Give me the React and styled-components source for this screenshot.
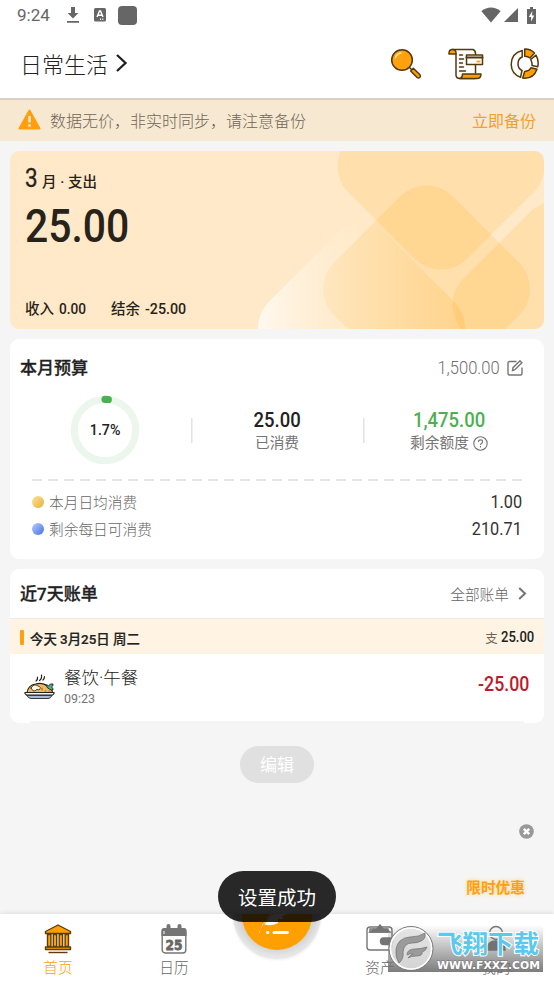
import React from 'react';
import styled, { createGlobalStyle } from 'styled-components';

const GlobalStyle = createGlobalStyle`
  * {
    box-sizing: border-box;
  }
  body {
    margin: 0;
    background: #f5f5f5;
    font-family: Roboto, 'Noto Sans CJK SC', sans-serif;
    color: #212121;
  }
`;

const tabs = [
  { key: 'home', label: '首页', active: true },
  { key: 'calendar', label: '日历' },
  { key: 'add' },
  { key: 'assets', label: '资产' },
  { key: 'me', label: '我的' },
];

const averages = [
  { label: '本月日均消费', value: '1.00', from: '#fbe3a0', to: '#e9b031' },
  { label: '剩余每日可消费', value: '210.71', from: '#b9cdfb', to: '#4270e4' },
];

function StatusBar() {
  return (
    <StatusRow>
      <Clock>9:24</Clock>
      <svg width='14' height='18' viewBox='0 0 14 18' fill='#666'>
        <path d='M5 1h4v6h3.4L7 12.4 1.6 7H5zM1 15h12v1.7H1z' />
      </svg>
      <svg width='12' height='14' viewBox='0 0 12 14'>
        <rect width='12' height='13.5' rx='1.5' fill='#666' />
        <path
          d='M3 9 5.5 3h1L9 9M4 7.2h4M6 11.3h1M8.3 11.3h1'
          fill='none'
          stroke='#fff'
          strokeWidth='1.4'
        />
      </svg>
      <AppSquare />
      <StatusIcons>
        <svg width='20' height='16' viewBox='0 0 20 16' fill='#666'>
          <path d='M.4 4.2C6-.6 14-.6 19.6 4.2L10 15.5z' />
        </svg>
        <svg width='14' height='14' viewBox='0 0 14 14' fill='#666'>
          <path d='M14 0v14H0z' />
        </svg>
        <svg width='9' height='17' viewBox='0 0 9 17'>
          <path d='M3 0h3v2h3v15H0V2h3z' fill='#666' />
          <path d='M5.3 4 1.8 10h2.3v4.5L7.3 8.5H5z' fill='#fff' />
        </svg>
      </StatusIcons>
    </StatusRow>
  );
}

const SearchIcon = (
  <svg width='32' height='32' viewBox='0 0 32 32'>
    <g stroke='#54380c' strokeWidth='1.5' strokeLinecap='round' strokeLinejoin='round'>
      <path d='m18.5 18.5 3 3' />
      <path d='m20.7 23 2.6-2.7 6.7 6.5q1 1.5-.3 2.7-1.3 1-2.6 0z' fill='#ff9f05' />
      <circle cx='12' cy='12' r='10.3' fill='#ffa20d' />
    </g>
    <path d='M5.500 9.500q1.500-4 5.500-4.500' fill='none' stroke='#ffe4ad' strokeWidth='1.6' strokeLinecap='round' />
  </svg>
);

const BillIcon = (
  <svg width='36' height='32' viewBox='0 0 36 32'>
    <g fill='none' stroke='#54380c' strokeWidth='1.5' strokeLinejoin='round' strokeLinecap='round'>
      <path d='M4 1.5h21q2.5 1 2.5 4v1M8 6v21q0 3.500 4 3.500h15M27.500 17v8' />
      <path d='M1 5q0-3.500 3.500-3.500T8 5v1H1z' fill='#ff9f05' />
      <path d='M14.500 26H33q0 4.500-4 4.500H11.500q3-.5 3-4.500z' fill='#ff9f05' />
      <rect x='18.5' y='7' width='16' height='9.5' fill='#fff' />
      <path d='M18.500 9.500h16' strokeWidth='2' />
      <path d='M11.500 7h3M11.500 11h4M11.500 15h3M11.500 19h4M11.500 23h6' />
    </g>
    <path d='M28.500 13.500h4' stroke='#ff9f05' strokeWidth='1.8' />
  </svg>
);

const ChartIcon = (
  <svg width='30' height='32' viewBox='0 0 30 32'>
    <g stroke='#54380c' strokeWidth='1.5' strokeLinejoin='round' fill='#fff'>
      <path d='M12.2 2.500V9q-4.2 1.500-4.2 7 0 4.500 4 6.500l-1.500 6.800Q1.500 26 1.200 16.500 1.500 5 12.200 2.500z' />
      <path d='M14.7 1q5.800-.2 9.800 4l-4.500 5q-2-1.700-5.300-1.800z' fill='#ff9f05' />
      <path d='m26 7.200-5.300 4.300q1.800 3.500 1.300 6l5.700 1.300q1.500-6-1.700-11.600z' />
      <path d='m27 21.200-6-1.500q-1.700 3.500-6.300 3.800l-2 6.500q10.800 1.200 14.300-8.800z' fill='#ff9f05' />
    </g>
  </svg>
);

function Header() {
  return (
    <HeaderRow>
      <Ledger>
        日常生活
        <svg width='14' height='20' viewBox='0 0 14 20' fill='none' stroke='#212121' strokeWidth='2.3'>
          <path d='m2 2 8.500 8L2 18' />
        </svg>
      </Ledger>
      <HeaderIcons>
        {SearchIcon}
        {BillIcon}
        {ChartIcon}
      </HeaderIcons>
    </HeaderRow>
  );
}

function BackupBanner() {
  return (
    <Banner>
      <svg width='23' height='21' viewBox='0 0 23 21'>
        <path d='M11.500 1.500 21.500 19.500H1.500z' fill='#ff9f0e' stroke='#ff9f0e' strokeWidth='2' strokeLinejoin='round' />
        <path d='M11.500 7v6.500M11.500 15.300v2.500' stroke='#f9e8d0' strokeWidth='2.5' />
      </svg>
      <BannerText>数据无价，非实时同步，请注意备份</BannerText>
      <BannerAction>立即备份</BannerAction>
    </Banner>
  );
}

function Diamond({ cx, cy, fill = '#ffa000', opacity = 0.14 }) {
  return (
    <rect
      x={cx - 84}
      y={cy - 84}
      width='168'
      height='168'
      rx='37'
      transform={`rotate(45 ${cx} ${cy})`}
      fill={fill}
      fillOpacity={opacity}
    />
  );
}

function SummaryCard() {
  return (
    <Summary>
      <SummaryArt viewBox='0 0 534 178'>
        <defs>
          {/* runs left to right once the diamond's 45 degree turn is undone */}
          <linearGradient
            id='glow'
            gradientUnits='userSpaceOnUse'
            gradientTransform='rotate(-45 351.5 177)'
            x1='248'
            y1='177'
            x2='455'
            y2='177'
          >
            <stop offset='0' stopColor='#fff' stopOpacity='.72' />
            <stop offset='.45' stopColor='#fff0d8' stopOpacity='.2' />
            <stop offset='1' stopColor='#ffa000' stopOpacity='.18' />
          </linearGradient>
        </defs>
        <Diamond cx={431} cy={15} />
        <Diamond cx={416.5} cy={138} />
        <Diamond cx={546} cy={154} />
        <Diamond cx={351.5} cy={177} fill='url(#glow)' opacity={1} />
      </SummaryArt>
      <SummaryBody>
        <MonthLine>
          <Num $size={25} $sx={0.9} $weight={400}>3</Num>
          月 · 支出
        </MonthLine>
        <Total>
          <Num $size={47} $sx={0.87} $weight={500}>25.00</Num>
        </Total>
        <BalanceLine>
          <Balance $width={86}>
            收入 <Num $size={15.5} $sx={0.88} $weight={500}>0.00</Num>
          </Balance>
          <Balance>
            结余 <Num $size={15.5} $sx={0.92} $weight={500}>-25.00</Num>
          </Balance>
        </BalanceLine>
      </SummaryBody>
    </Summary>
  );
}

function BudgetCard() {
  return (
    <Card $height={220}>
      <BudgetHead>
        <CardTitle>本月预算</CardTitle>
        <BudgetAmount>
          <Num $size={18} $sx={0.92} $weight={300} $origin='right'>1,500.00</Num>
          <svg width='16' height='16' viewBox='0 0 16 16' fill='none' stroke='#757575' strokeWidth='1.4'>
            <path d='M9.500 1.500h-7q-1.500 0-1.500 1.500v10.500Q1 15 2.500 15h11q1.500 0 1.500-1.500V7.500' />
            <path d='m5.500 10.500.5-2.800L13 .8l1.900 1.900-7 7z' />
          </svg>
        </BudgetAmount>
      </BudgetHead>
      <Stats>
        <Stat>
          <Ring>
            <svg width='70' height='70' viewBox='0 0 70 70' fill='none' strokeWidth='7.2'>
              <circle cx='35' cy='35' r='30.7' stroke='#edf6ed' />
              <path d='M35 4.300a30.700 30.700 0 0 1 3.300.2' stroke='#4caf50' strokeLinecap='round' />
            </svg>
            <RingLabel>
              <Num $size={15} $sx={0.95} $weight={500} $origin='center'>1.7%</Num>
            </RingLabel>
          </Ring>
        </Stat>
        <Stat $divided>
          <Num $size={20.5} $sx={0.9} $weight={500} $origin='center'>25.00</Num>
          <StatLabel>已消费</StatLabel>
        </Stat>
        <Stat $divided $color='#4caf50'>
          <Num $size={20.5} $sx={0.9} $weight={500} $origin='center'>1,475.00</Num>
          <StatLabel>
            剩余额度
            <svg width='15' height='15' viewBox='0 0 15 15' fill='none' stroke='#757575' strokeWidth='1.1'>
              <circle cx='7.5' cy='7.5' r='6.7' />
              <path d='M5.400 6q0-2.100 2.100-2.100T9.600 5.800q0 1-1.100 1.600-1 .5-1 1.500M7.500 10v1.400' />
            </svg>
          </StatLabel>
        </Stat>
      </Stats>
      <DashedLine />
      {averages.map((item) => (
        <AverageRow key={item.label}>
          <Dot $from={item.from} $to={item.to} />
          {item.label}
          <AverageValue>
            <Num $size={17.5} $sx={0.93} $weight={400} $origin='right'>{item.value}</Num>
          </AverageValue>
        </AverageRow>
      ))}
    </Card>
  );
}

const FoodIcon = (
  <svg width='31' height='28' viewBox='0 0 31 28' strokeLinecap='round' strokeLinejoin='round'>
    <path d='M12 8q2-1.500 1.500-4M15.500 7.500q2.500-1.500 2-5.500M19 7q1.500-1.500 1.500-3.500' fill='none' stroke='#222' strokeWidth='1.2' />
    <path d='M3 20q1-8 8.500-9 7-2 12 2 5 3 5 7z' fill='#eebb62' stroke='#222' strokeWidth='1.2' />
    <path d='M22 12q1.500-.5 2.500 1 1.500-3 4.500-2 .5 2-1.500 3 2 1 1.500 3-2 .5-3.500-1-2 0-3.500-4z' fill='#4fae8a' stroke='#222' strokeWidth='.9' />
    <path d='M7 15q3-5 7-2 4 1 1 4-2-2-4 1-2 1-4-3z' fill='#fff5d8' stroke='#222' strokeWidth='.8' />
    <path d='M18 15v2M21 18h1M25 18h1' stroke='#b36826' strokeWidth='1.2' />
    <path d='M1 19.500h29q.5 1.500-1.500 2.500H2.500Q.5 21 1 19.500z' fill='#f4f4f4' stroke='#222' strokeWidth='1.2' />
    <path d='M3 22.500h25q-1.500 3-4 3H7q-3 0-4-3z' fill='#aab8d4' stroke='#34394a' strokeWidth='1' />
  </svg>
);

function BillsCard() {
  return (
    <Card $height={154}>
      <BillsHead>
        <CardTitle>近7天账单</CardTitle>
        <AllBills>
          全部账单
          <svg width='9' height='13' viewBox='0 0 9 13' fill='none' stroke='#757575' strokeWidth='2'>
            <path d='m1.200 1 5.800 5.500L1.200 12' />
          </svg>
        </AllBills>
      </BillsHead>
      <DayBar>
        <DayMark />
        今天 3月25日 周二
        <DayTotal>
          支
          <Num $size={15} $sx={0.87} $weight={500} $origin='right'>25.00</Num>
        </DayTotal>
      </DayBar>
      <BillRow>
        {FoodIcon}
        <BillText>
          <BillName>餐饮·午餐</BillName>
          <BillTime>09:23</BillTime>
        </BillText>
        <BillAmount>
          <Num $size={19.5} $sx={0.91} $weight={500} $origin='right'>-25.00</Num>
        </BillAmount>
      </BillRow>
      <BillLine />
    </Card>
  );
}

const tabIcons = {
  home: (
    <svg width='28' height='30' viewBox='0 0 28 30' stroke='#5c3c08' strokeWidth='1.4' strokeLinejoin='round' fill='#ffa000'>
      <path d='M14 1 1.500 7.500v2h25v-2z' />
      <path d='M3.500 10.500h3.400v12H3.500zM9.300 10.500h3.400v12H9.300zM15.200 10.500h3.400v12h-3.400zM21.100 10.500h3.400v12h-3.400z' />
      <path d='M1.500 23h25v2.500h-25z' />
      <path d='M4.500 28.500h19' />
    </svg>
  ),
  calendar: (
    <svg width='26' height='30' viewBox='0 0 26 30'>
      <rect x='1.2' y='5' width='23.6' height='24' rx='3' fill='#fff' stroke='#757575' strokeWidth='1.4' />
      <path d='M.5 12V6.500Q.5 4 3 4h2.500V2q0-2 2-2t2 2v2h7V2q0-2 2-2t2 2v2H23q2.500 0 2.500 2.500V12z' fill='#757575' />
      <path d='M3 7v3' stroke='#fff' strokeWidth='1' />
      <text
        x='13'
        y='25.5'
        textAnchor='middle'
        fontFamily='DejaVu Sans'
        fontWeight='700'
        fontSize='13.5'
        fill='#666'
        stroke='#666'
        strokeWidth='.8'
        textLength='17'
        lengthAdjust='spacingAndGlyphs'
      >
        25
      </text>
    </svg>
  ),
  assets: (
    <svg width='28' height='30' viewBox='0 0 28 30' stroke='#757575' fill='#fff' strokeWidth='1.4'>
      <rect x='1' y='3' width='25' height='23' rx='3' />
      <path d='M4 8V5h18v3z' />
      <path d='m4 8 4-3 2 1 4-5 4 5 2-1 4 3z' fill='#757575' />
      <rect x='14.5' y='14' width='13' height='6.5' rx='3.2' fill='#757575' />
    </svg>
  ),
  me: (
    <svg width='26' height='30' viewBox='0 0 26 30' stroke='#757575' fill='#fff' strokeWidth='1.4'>
      <circle cx='13' cy='9' r='6.5' />
      <path d='M4 26q0-9 9-9t9 9z' fill='#757575' />
    </svg>
  ),
};

function TabBar() {
  return (
    <Nav>
      {tabs.map((tab) =>
        tab.key === 'add' ? (
          <AddSlot key={tab.key}>
            <AddButton>
              <svg width='60' height='60' viewBox='0 0 60 60'>
                <path d='M12 48q3-8 9-16 6-9 22-19 2 9-4 17l-4 1 1 3-5 0 0 4q-6 3-11 2l-4.500-1-3 9z' fill='#fff' />
                <path d='M16 41q4-8 12-14' stroke='#ffa000' strokeWidth='1' fill='none' />
                <path d='M27 47.500h13.500M20.500 47.500h.5' stroke='#fff' strokeWidth='3' strokeLinecap='round' />
              </svg>
            </AddButton>
          </AddSlot>
        ) : (
          <Tab key={tab.key} $active={tab.active}>
            {tabIcons[tab.key]}
            {tab.label}
          </Tab>
        ),
      )}
    </Nav>
  );
}

function SiteBadge() {
  return (
    <Badge>
      <svg width='46' height='47' viewBox='0 0 46 47'>
        <circle cx='23' cy='23.5' r='22' fill='#e2e2e2' fillOpacity='.85' stroke='#777' strokeWidth='1' />
        <circle cx='23' cy='23.5' r='20.5' fill='none' stroke='#fff' strokeWidth='1.5' />
        <path
          d='M11 38q-4-6-3-14 2-11 14-12 9 0 15-4 1 6-4 8-3 2-9 2-8 0-9 9 1 7-4 11zM19 30q0-6 8-6 6 0 12-2-1 4-5 5 1 4-6 4-5 0-8 2 1-2 5-4-3-1-6 1z'
          fill='#9b9b9b'
          stroke='#777'
          strokeWidth='.8'
        />
      </svg>
      <BadgeText>
        <BadgeName>飞翔下载</BadgeName>
        <BadgeUrl viewBox='0 0 106 13'>
          <text x='1' y='11' textLength='103' lengthAdjust='spacingAndGlyphs'>WWW.FXXZ.COM</text>
        </BadgeUrl>
      </BadgeText>
    </Badge>
  );
}

export default function App() {
  return (
    <Screen>
      <GlobalStyle />
      <StatusBar />
      <Header />
      <BackupBanner />
      <Content>
        <SummaryCard />
        <BudgetCard />
        <BillsCard />
        <EditButton>编辑</EditButton>
        <Promo>
          <svg width='15' height='15' viewBox='0 0 15 15'>
            <circle cx='7.5' cy='7.5' r='7.3' fill='#999' />
            <path d='m4.800 4.800 5.400 5.400m0-5.400-5.400 5.400' stroke='#fff' strokeWidth='2.4' />
          </svg>
          <PromoText>限时优惠</PromoText>
        </Promo>
      </Content>
      <TabBar />
      <Toast>设置成功</Toast>
      <SiteBadge />
    </Screen>
  );
}

const Screen = styled.div`
  position: relative;
  display: flex;
  flex-direction: column;
  width: 554px;
  height: 984px;
  overflow: hidden;
  background: #f5f5f5;
`;

const Num = styled.span`
  display: inline-block;
  font-size: ${(p) => p.$size}px;
  font-weight: ${(p) => p.$weight};
  line-height: 1;
  white-space: nowrap;
  transform: scaleX(${(p) => p.$sx});
  transform-origin: ${(p) => p.$origin || 'left'} center;
`;

const StatusRow = styled.div`
  display: flex;
  align-items: center;
  flex: none;
  height: 30px;
  padding: 0 18px 0 17px;
  background: #fff;
`;

const Clock = styled.span`
  width: 49px;
  font-size: 17px;
  color: #666;
  line-height: 30px;

  & + svg {
    margin-right: 14px;
  }
`;

const AppSquare = styled.span`
  width: 19px;
  height: 19px;
  margin-left: 12px;
  border-radius: 4px;
  background: #666;
`;

const StatusIcons = styled.div`
  display: flex;
  align-items: center;
  margin-left: auto;
  gap: 3px;

  svg:last-child {
    margin-left: 6px;
  }
`;

const HeaderRow = styled.header`
  display: flex;
  align-items: center;
  justify-content: space-between;
  flex: none;
  height: 70px;
  padding: 0 14px 1px 20px;
  background: #fff;
  border-bottom: 2px solid #dbd0c2;
`;

const Ledger = styled.div`
  display: flex;
  align-items: center;
  gap: 7px;
  padding-bottom: 2px;
  font-size: 22px;
  font-weight: 300;
`;

const HeaderIcons = styled.div`
  display: flex;
  align-items: center;
  gap: 26px;
  padding-top: 1px;
`;

const Banner = styled.div`
  display: flex;
  align-items: center;
  flex: none;
  height: 41px;
  padding: 0 18px 2px;
  background: #f7e8d1;
  font-size: 16px;
`;

const BannerText = styled.span`
  margin-left: 9px;
  font-weight: 300;
  color: #6f6658;
`;

const BannerAction = styled.span`
  margin-left: auto;
  color: #f2a02c;
`;

const Content = styled.main`
  display: flex;
  flex-direction: column;
  flex: 1;
  gap: 10px;
  padding: 10px 10px 0;
`;

const Summary = styled.section`
  display: grid;
  flex: none;
  height: 178px;
  border-radius: 9px;
  overflow: hidden;
  background: #ffe9c8;
  color: #28231a;
`;

const SummaryArt = styled.svg`
  grid-area: 1 / 1;
  width: 534px;
  height: 178px;
`;

const SummaryBody = styled.div`
  grid-area: 1 / 1;
  display: flex;
  flex-direction: column;
  z-index: 1;
  padding: 15px 15px 11px;
`;

const MonthLine = styled.div`
  display: flex;
  align-items: baseline;
  gap: 3px;
  height: 27px;
  line-height: 30px;
  font-size: 14.5px;
  font-weight: 500;

  ${Num} {
    -webkit-text-stroke: 0.3px;
  }
`;

const Total = styled.div`
  height: 63px;
  padding-top: 9px;
  line-height: 1;
`;

const BalanceLine = styled.div`
  display: flex;
  margin-top: auto;
`;

const Balance = styled.div`
  display: flex;
  align-items: center;
  gap: 5px;
  width: ${(p) => (p.$width ? `${p.$width}px` : 'auto')};
  font-size: 14.5px;
  font-weight: 500;
  line-height: 16px;
`;

const Card = styled.section`
  flex: none;
  height: ${(p) => p.$height}px;
  border-radius: 9px;
  overflow: hidden;
  background: #fff;
`;

const CardTitle = styled.h2`
  margin: 0;
  font-size: 17px;
  font-weight: 500;
  line-height: 24px;
  -webkit-text-stroke: 0.3px #212121;
`;

const BudgetHead = styled.div`
  display: flex;
  align-items: center;
  justify-content: space-between;
  height: 50px;
  padding: 7px 21px 0 10px;
`;

const BudgetAmount = styled.div`
  display: flex;
  align-items: center;
  gap: 7px;
  color: #707070;
`;

const Stats = styled.div`
  display: grid;
  grid-template-columns: repeat(3, 172px);
  height: 82px;
  margin-left: 9px;
`;

const Stat = styled.div`
  display: flex;
  flex-direction: column;
  align-items: center;
  justify-content: center;
  padding-top: ${(p) => (p.$divided ? 4 : 0)}px;
  color: ${(p) => p.$color || '#212121'};
  background: ${(p) =>
    p.$divided ? 'linear-gradient(#e2e2e2, #e2e2e2) 0 29px / 1.5px 25px no-repeat' : 'none'};
`;

const StatLabel = styled.div`
  display: flex;
  align-items: center;
  gap: 4px;
  margin-top: 2px;
  font-size: 14.7px;
  line-height: 21px;
  color: #757575;
`;

const Ring = styled.div`
  display: grid;
  place-items: center;

  & > * {
    grid-area: 1 / 1;
  }
`;

const RingLabel = styled.span`
  line-height: 1;
`;

const DashedLine = styled.div`
  height: 2px;
  margin: 8px 22px 7px;
  background: repeating-linear-gradient(90deg, #e6e6e6 0 10px, transparent 10px 16px);
`;

const AverageRow = styled.div`
  display: flex;
  align-items: center;
  height: 27px;
  padding: 0 22px;
  font-size: 14.7px;
  font-weight: 300;
  color: #666;
`;

const Dot = styled.span`
  width: 12px;
  height: 12px;
  margin-right: 5px;
  border-radius: 50%;
  background: linear-gradient(135deg, ${(p) => p.$from}, ${(p) => p.$to});
`;

const AverageValue = styled.span`
  margin-left: auto;
  padding-top: 2px;
  line-height: 1;
  color: #333;
`;

const BillsHead = styled.div`
  display: flex;
  align-items: center;
  justify-content: space-between;
  height: 49px;
  padding: 0 17px 0 10px;
`;

const AllBills = styled.div`
  display: flex;
  align-items: center;
  gap: 9px;
  font-size: 14.7px;
  font-weight: 300;
  color: #666;
`;

const DayBar = styled.div`
  display: flex;
  align-items: center;
  height: 36px;
  padding: 2px 10px 0;
  border-top: 1px solid #eeeae5;
  background: #fff4e3;
  font-size: 13.4px;
  font-weight: 500;
  -webkit-text-stroke: 0.2px;
`;

const DayMark = styled.span`
  width: 4px;
  height: 15px;
  margin-right: 6px;
  border-radius: 1px;
  background: #ffa011;
`;

const DayTotal = styled.span`
  display: flex;
  align-items: center;
  margin-left: auto;
  font-size: 12.5px;
  font-weight: 400;
  color: #6b6458;
  -webkit-text-stroke: 0;

  ${Num} {
    margin-left: -2px;
    color: #212121;
  }
`;

const BillRow = styled.div`
  display: flex;
  align-items: center;
  height: 67px;
  padding: 0 15px 2px 14px;
`;

const BillText = styled.div`
  margin-left: 9px;
`;

const BillName = styled.div`
  font-size: 17.5px;
  font-weight: 300;
  line-height: 24px;
`;

const BillTime = styled.div`
  font-size: 12.5px;
  line-height: 17px;
  color: #757575;
`;

const BillAmount = styled.span`
  margin-left: auto;
  padding-bottom: 3px;
  line-height: 1;
  color: #c2182b;
`;

const BillLine = styled.div`
  height: 2px;
  margin: 0 20px;
  background: #f5f5f5;
`;

const EditButton = styled.div`
  align-self: center;
  margin-top: 13px;
  width: 74px;
  height: 37px;
  border-radius: 19px;
  background: #e0e0e0;
  color: #fff;
  font-size: 17px;
  line-height: 38px;
  text-align: center;
`;

const Promo = styled.div`
  display: flex;
  flex-direction: column;
  align-items: flex-end;
  gap: 39px;
  padding: 31px 10px 0 0;
`;

const PromoText = styled.span`
  margin-right: 9px;
  font-size: 14.7px;
  font-weight: 700;
  line-height: 20px;
  color: #ff9f10;
  text-shadow: 0 0 4px #ffd27a;
`;

const Nav = styled.nav`
  display: grid;
  grid-template-columns: 116px 116px 90px 116px 116px;
  flex: none;
  height: 70px;
  background: #fff;
  box-shadow: 0 0 5px rgba(0, 0, 0, 0.14);
`;

const Tab = styled.div`
  display: flex;
  flex-direction: column;
  align-items: center;
  padding-top: 10px;
  font-size: 14.7px;
  font-weight: 300;
  line-height: 28px;
  color: ${(p) => (p.$active ? '#ff9f10' : '#666')};
`;

const AddSlot = styled.div`
  width: 88px;
  height: 88px;
  margin: -43px auto 0;
  padding: 9px;
  border-radius: 50%;
  background: radial-gradient(circle at 50% 45%, #cfcfcf 55%, #e6e6e6 70%);
  box-shadow: 0 1px 3px rgba(0, 0, 0, 0.08);
  clip-path: inset(43px -8px -8px -8px);
`;

const AddButton = styled.div`
  display: flex;
  align-items: center;
  justify-content: center;
  width: 70px;
  height: 70px;
  border-radius: 50%;
  background: #ffa000;
`;

const Toast = styled.div`
  position: absolute;
  left: 218px;
  top: 871px;
  width: 118px;
  height: 51px;
  border-radius: 26px;
  background: rgba(0, 0, 0, 0.84);
  color: #fff;
  font-size: 19.5px;
  line-height: 55px;
  text-align: center;
`;

const Badge = styled.div`
  position: absolute;
  left: 388px;
  top: 925px;
  display: flex;
  width: 155px;
  height: 47px;
  background: linear-gradient(rgba(110, 110, 110, 0), rgba(110, 110, 110, 0.9));
`;

const BadgeText = styled.div`
  display: flex;
  flex-direction: column;
  margin-left: 2px;
`;

const BadgeName = styled.span`
  height: 33px;
  padding-left: 1px;
  font-size: 25.5px;
  font-weight: 700;
  line-height: 38px;
  color: #5cc8ee;
  -webkit-text-stroke: 2px #fff;
  paint-order: stroke fill;
  white-space: nowrap;
`;

const BadgeUrl = styled.svg`
  width: 106px;
  height: 13px;

  text {
    font-family: 'DejaVu Sans', sans-serif;
    font-size: 11px;
    font-weight: 700;
    fill: #fff;
    stroke: #777;
    stroke-width: 1px;
    paint-order: stroke;
  }
`;
